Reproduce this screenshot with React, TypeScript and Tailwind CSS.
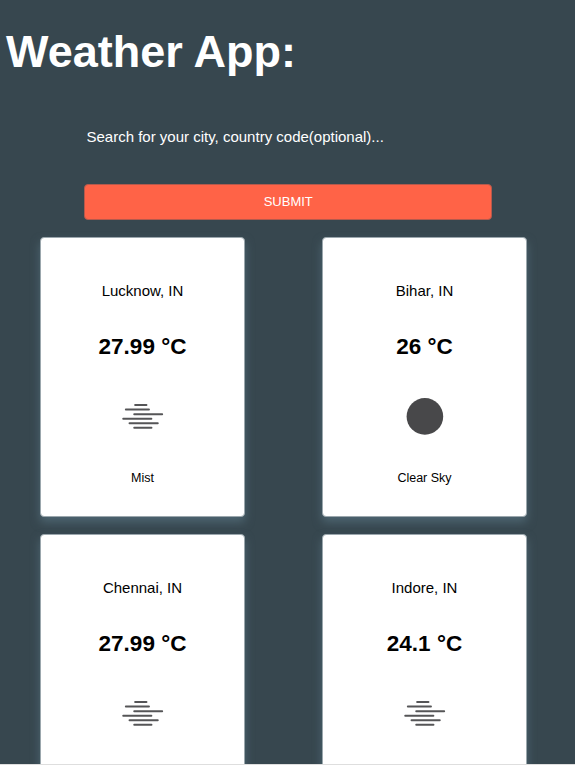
import { useState } from 'react'

type Icon = 'mist' | 'clear'

interface Weather {
  city: string
  temp: string
  icon: Icon
  description?: string
}

const CITIES: Weather[] = [
  { city: 'Lucknow, IN', temp: '27.99', icon: 'mist', description: 'Mist' },
  { city: 'Bihar, IN', temp: '26', icon: 'clear', description: 'Clear Sky' },
  { city: 'Chennai, IN', temp: '27.99', icon: 'mist' },
  { city: 'Indore, IN', temp: '24.1', icon: 'mist' },
]

function WeatherIcon({ icon }: { icon: Icon }) {
  if (icon === 'clear') {
    return (
      <svg width="51" height="50" viewBox="0 0 51 50" className="block">
        <circle cx="25.9" cy="25.4" r="18.3" fill="#48484a" />
      </svg>
    )
  }
  return (
    <svg width="51" height="50" viewBox="0 0 51 50" className="block" stroke="#555557" strokeWidth="1.9" strokeLinecap="round">
      <path d="M18.1 14H29.5M8.8 18.5H32M17.2 23.3H45.2M6.2 27.8H34.4M12.5 32.3H40.8M17.2 36.7H34.5" />
    </svg>
  )
}

function WeatherCard({ weather }: { weather: Weather }) {
  return (
    <div className="flex h-[280px] w-[205px] flex-col items-center rounded-[4px] border border-[#9ba7ad] bg-white pt-[43px] text-black shadow-[0_5px_10px_#4e6672]">
      <div className="text-[15px] leading-5">{weather.city}</div>
      <div className="mt-8 text-[22.5px] leading-[28px] font-bold">{weather.temp} °C</div>
      <div className="mt-[30px]">
        <WeatherIcon icon={weather.icon} />
      </div>
      {weather.description && <div className="mt-[27px] text-[12.5px] leading-5">{weather.description}</div>}
    </div>
  )
}

export default function App() {
  const [query, setQuery] = useState('')

  return (
    <div className="flex h-screen flex-col overflow-hidden border-b border-[#dedede] bg-[#37474f] font-['Liberation_Sans',Arial,sans-serif]">
      <h1 className="mt-[26px] ml-1.5 shrink-0 text-[45px] leading-[52px] font-bold text-white">Weather App:</h1>
      <form className="ml-[84.5px] mt-[42px] flex w-[407px] shrink-0 flex-col" onSubmit={(e) => e.preventDefault()}>
        <input
          value={query}
          onChange={(e) => setQuery(e.target.value)}
          placeholder="Search for your city, country code(optional)..."
          className="h-8 px-0.5 text-[15px] text-white outline-none placeholder:text-white"
        />
        <button
          type="submit"
          className="mt-8 -ml-[0.5px] h-[36px] rounded-[4px] border border-[#b5594c] bg-[#ff6347] pl-px text-[13px] text-white"
        >
          SUBMIT
        </button>
      </form>
      <div className="mt-[17px] ml-10 grid shrink-0 grid-cols-[205px_205px] gap-x-[77px] gap-y-[17px]">
        {CITIES.map((w) => (
          <WeatherCard key={w.city} weather={w} />
        ))}
      </div>
    </div>
  )
}
